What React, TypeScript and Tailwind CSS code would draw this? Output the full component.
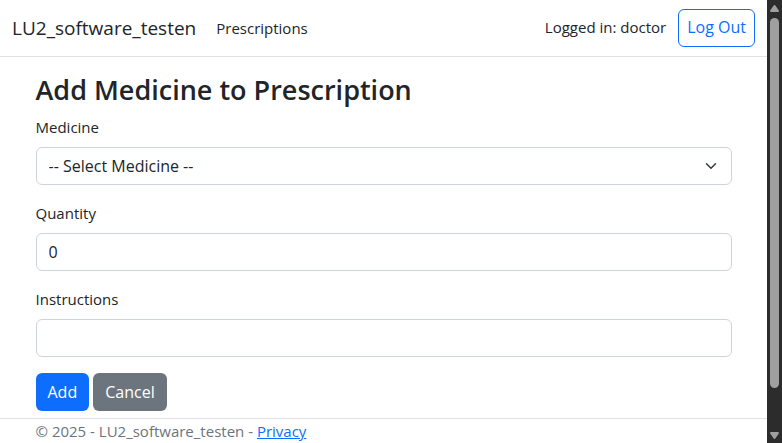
import type { ReactNode } from "react";

const control =
  "block h-[38px] w-full appearance-none rounded-md border border-[#ced4da] bg-white px-3 text-[16px] text-[#212529] outline-none focus:border-[#86b7fe]";

function Field({ id, label, children }: { id: string; label: string; children: ReactNode }) {
  return (
    <div className="mb-4">
      <label htmlFor={id} className="mb-2 block w-fit">
        {label}
      </label>
      {children}
    </div>
  );
}

function Header() {
  return (
    <header className="border-b border-[#dee2e6]">
      <nav className="flex h-14 items-center px-3">
        <a href="#home" className="mr-5 text-[19px]">
          LU2_software_testen
        </a>
        <a href="#prescriptions">Prescriptions</a>
        <div className="ml-auto flex items-center gap-3">
          <span className="pb-0.5">Logged in: doctor</span>
          <button
            type="button"
            className="h-[38px] rounded-md border border-[#0d6efd] px-2 pb-0.5 text-[16px] text-[#0d6efd]"
          >
            Log Out
          </button>
        </div>
      </nav>
    </header>
  );
}

function MedicineForm() {
  return (
    <form onSubmit={(event) => event.preventDefault()}>
      <Field id="medicine" label="Medicine">
        <div className="relative">
          <select id="medicine" className={control}>
            <option>-- Select Medicine --</option>
          </select>
          <svg
            viewBox="0 0 16 16"
            className="pointer-events-none absolute top-[13px] right-[13px] h-3 w-4"
            fill="none"
            stroke="#343a40"
            strokeLinecap="round"
            strokeLinejoin="round"
            strokeWidth="2"
            aria-hidden="true"
          >
            <path d="m2 5 6 6 6-6" />
          </svg>
        </div>
      </Field>
      <Field id="quantity" label="Quantity">
        <input id="quantity" type="text" inputMode="numeric" defaultValue="0" className={control} />
      </Field>
      <Field id="instructions" label="Instructions">
        <input id="instructions" type="text" className={control} />
      </Field>
      <div className="flex gap-1">
        <button type="submit" className="h-[38px] rounded-md bg-[#0d6efd] px-3 text-[16px] text-white">
          Add
        </button>
        <button type="button" className="h-[38px] rounded-md bg-[#6c757d] px-3 text-[16px] text-white">
          Cancel
        </button>
      </div>
    </form>
  );
}

function ScrollTrack() {
  return (
    <div className="flex w-[15px] shrink-0 flex-col items-center bg-[#2c2c2c]" aria-hidden="true">
      <svg viewBox="0 0 15 18" className="h-[18px] w-[15px] shrink-0">
        <path d="M7.5 6 11 11H4Z" fill="#9f9f9f" stroke="#9f9f9f" strokeWidth="2" strokeLinejoin="round" />
      </svg>
      <div className="w-[9px] flex-1 rounded-full bg-[#9f9f9f]" />
      <div className="h-9 shrink-0" />
      <svg viewBox="0 0 15 19" className="h-[19px] w-[15px] shrink-0">
        <path d="M7.5 14 11 9H4Z" fill="#9f9f9f" stroke="#9f9f9f" strokeWidth="2" strokeLinejoin="round" />
      </svg>
    </div>
  );
}

export default function App() {
  return (
    <div className="flex h-screen bg-white font-['Segoe_UI','Open_Sans',sans-serif] text-[15px] leading-6 text-[#212529]">
      <div className="flex min-w-0 flex-1 flex-col">
        <Header />
        <main className="mx-auto w-full max-w-[720px] px-3 pt-4">
          <h1 className="mb-2 text-[27px] leading-[34px] font-semibold">Add Medicine to Prescription</h1>
          <MedicineForm />
        </main>
        <footer className="mt-auto border-t border-[#dee2e6] text-[#6c757d]">
          <div className="mx-auto w-full max-w-[720px] px-3">
            &copy; 2025 - LU2_software_testen -{" "}
            <a href="#privacy" className="text-[#0d6efd] underline">
              Privacy
            </a>
          </div>
        </footer>
      </div>
      <ScrollTrack />
    </div>
  );
}
